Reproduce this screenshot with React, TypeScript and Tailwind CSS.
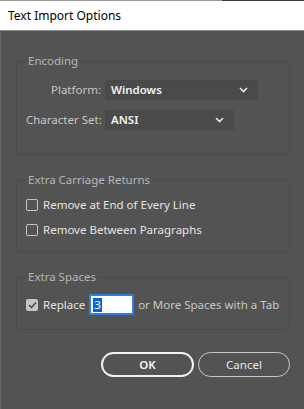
function Chevron() {
  return (
    <svg width="9" height="6" viewBox="0 0 9 6" className="shrink-0">
      <polyline points="1,1 4.5,4.5 8,1" fill="none" stroke="#e8e8e8" strokeWidth="1.6" />
    </svg>
  )
}

function Select({ value, width }: { value: string; width: string }) {
  return (
    <div className={`${width} h-[20px] flex items-center justify-between pl-[5px] pr-[9px] bg-[#4a4a4a] border border-[#474747] rounded-[2px] text-[#f2f2f2] font-semibold`}>
      <span>{value}</span>
      <Chevron />
    </div>
  )
}

function Box({ checked }: { checked?: boolean }) {
  if (checked) {
    return (
      <div className="w-[12px] h-[12px] shrink-0 rounded-[2px] bg-[#c6c6c6] flex items-center justify-center">
        <svg width="9" height="8" viewBox="0 0 9 8">
          <polyline points="1,4 3.5,6.5 8,1.5" fill="none" stroke="#4a4a4a" strokeWidth="1.6" />
        </svg>
      </div>
    )
  }
  return <div className="w-[12px] h-[12px] shrink-0 rounded-[2px] border border-[#c4c4c4]" />
}

export default function App() {
  return (
    <div className="w-[304px] h-[409px] bg-[#535353] flex flex-col text-[11.5px] leading-[16px] font-['Noto_Sans','Open_Sans',sans-serif] overflow-hidden">
      <div className="flex h-px shrink-0">
        <div className="w-[222px] bg-[#9a9a9a]" />
        <div className="flex-1 bg-[#3c3c3c]" />
      </div>
      <div className="h-[30px] shrink-0 bg-white border-b border-[#8c8c8c] flex items-center pl-2 text-black text-[12px]">
        Text Import Options
      </div>
      <div className="flex-1 border-l border-[#6a6a6a] pl-[15px] pr-[14px] flex flex-col">
        <fieldset className="mt-[22px] border border-[#4a4a4a] rounded-[3px] pl-[9px] pb-[24px]">
          <legend className="px-[2px] text-[#b6b6b6]">Encoding</legend>
          <div className="mt-[11px] grid grid-cols-[75px_1fr] gap-x-[4px] gap-y-[10px] items-center text-[#c6c6c6]">
            <span className="text-right whitespace-nowrap">Platform:</span>
            <Select value="Windows" width="w-[153px]" />
            <span className="text-right whitespace-nowrap">Character Set:</span>
            <Select value="ANSI" width="w-[129px]" />
          </div>
        </fieldset>

        <fieldset className="mt-[17px] border border-[#4a4a4a] rounded-[3px] pl-[9px] pb-[13px]">
          <legend className="px-[2px] text-[#b6b6b6]">Extra Carriage Returns</legend>
          <div className="mt-[9px] flex flex-col gap-[9px] text-[#e4e4e4]">
            <label className="flex items-center gap-[5px] h-[16px]">
              <Box />
              <span>Remove at End of Every Line</span>
            </label>
            <label className="flex items-center gap-[5px] h-[16px]">
              <Box />
              <span>Remove Between Paragraphs</span>
            </label>
          </div>
        </fieldset>

        <fieldset className="mt-[17px] border border-[#4a4a4a] rounded-[3px] pl-[9px] pb-[14px]">
          <legend className="px-[2px] text-[#b6b6b6]">Extra Spaces</legend>
          <div className="mt-[9px] flex items-center h-[21px]">
            <Box checked />
            <span className="ml-[5px] text-[#e4e4e4]">Replace</span>
            <div className="ml-[4px] w-[45px] h-[21px] bg-white border-2 border-[#2b7fe0] flex items-center pl-[2px]">
              <span className="bg-[#0a64d8] text-white leading-[14px] px-px">3</span>
            </div>
            <span className="ml-[4px] text-[#c8c8c8] whitespace-nowrap">or More Spaces with a Tab</span>
          </div>
        </fieldset>

        <div className="mt-[22px] flex justify-end gap-[4px]">
          <button className="w-[93px] h-[25px] rounded-full border-2 border-[#f2f2f2] text-[#f2f2f2] font-semibold">OK</button>
          <button className="w-[92px] h-[25px] rounded-full border-[1.5px] border-[#c8c8c8] text-[#e8e8e8]">Cancel</button>
        </div>
      </div>
    </div>
  )
}
